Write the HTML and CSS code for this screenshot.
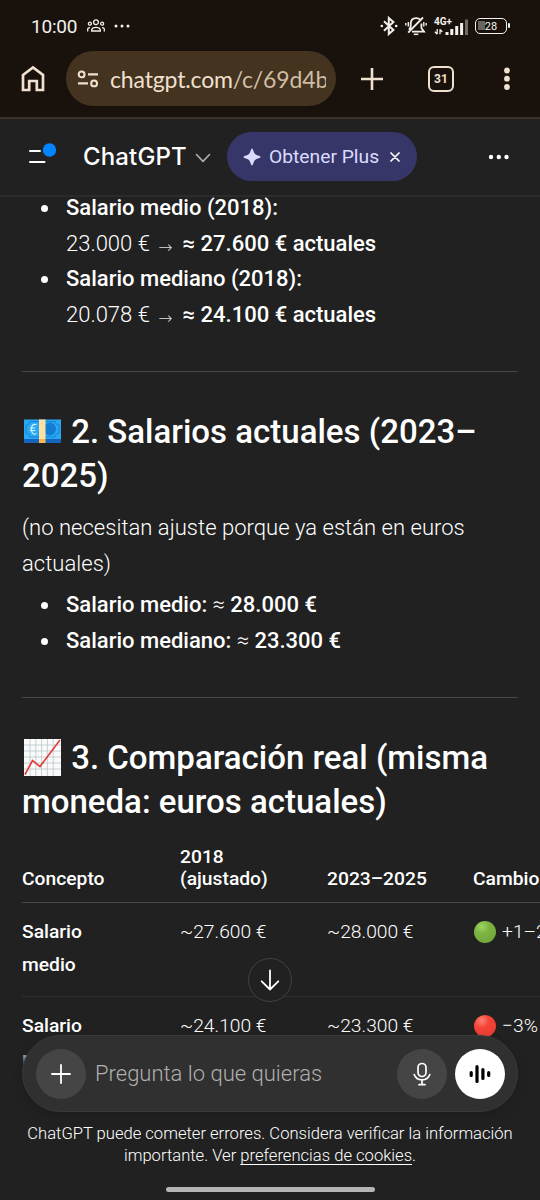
FILE: index.html
```html
<!DOCTYPE html>
<html lang="es">
<head>
<meta charset="utf-8">
<title>ChatGPT</title>
<link rel="stylesheet" href="styles.css">
</head>
<body>
<div class="phone">
  <div class="chrome">
    <div class="status">
      <span class="clock">10:00</span>
      <svg class="people" width="18" height="14" viewBox="0 0 18 14" fill="none" stroke="currentColor" stroke-width="1.3"><circle cx="9" cy="3.2" r="2.4"/><circle cx="2.9" cy="4.7" r="1.5"/><circle cx="15.1" cy="4.7" r="1.5"/><path d="M4.7 12v-1.4Q5.3 8.3 9 8.3t4.3 2.3V12ZM.7 12.5V10Q1 8.6 3 8.7M17.3 12.5V10Q17 8.6 15 8.7"/></svg>
      <svg class="dots" width="16" height="4" viewBox="0 0 16 4" fill="currentColor"><circle cx="2" cy="2" r="1.5"/><circle cx="8" cy="2" r="1.5"/><circle cx="14" cy="2" r="1.5"/></svg>
      <svg class="bt" width="18" height="20" viewBox="0 0 18 20" fill="none" stroke="currentColor" stroke-width="2"><path d="M4 5.2 13.4 14 8.8 18V2l4.6 4L4 14.8"/><circle cx="1.8" cy="10" r=".7" fill="currentColor" stroke-width="1.2"/><circle cx="16.2" cy="10" r=".7" fill="currentColor" stroke-width="1.2"/></svg>
      <svg class="bell" width="22" height="20" viewBox="0 0 22 20" fill="none" stroke="currentColor" stroke-width="1.8"><path d="M15.4 3.9Q13.9 2.1 11 2.1 6 2.1 5.7 7.6V11L4 13.8M7 15.6h12L16.4 12V7.6M3.2 16.6 18 1.5"/><path d="M8.8 18.3h4.5" stroke-width="1.5"/><path d="M3.3 6v4.5M18.8 6v4.5M.8 7.1v2.4M21.2 7.1v2.4" stroke-width="1.4"/></svg>
      <div class="network">
        <span class="net-label">4G+</span>
        <svg width="36" height="19" viewBox="0 0 36 19" fill="currentColor"><path d="M11.5 15h3v3h-3zM16.3 12h3v6h-3zM21.2 9h3v9h-3zM26.1 6h3v12h-3z"/><path opacity=".4" d="M31 2.5h3V18h-3z"/><path d="M3.2 12v5M.9 14.8l2.3 2.5M6 17.3v-5M6 12.5l2.3 2.5" fill="none" stroke="currentColor" stroke-width="1.3"/></svg>
      </div>
      <div class="battery"><span>28</span></div>
    </div>
    <div class="toolbar">
      <svg class="home" width="24" height="28" viewBox="0 0 24 28" fill="none" stroke="currentColor" stroke-width="2.7"><path d="M2 10 12 2.5l10 7.5V25h-6.2v-9H8.2v9H2Z"/></svg>
      <div class="url">
        <svg width="22" height="20" viewBox="0 0 22 20" fill="none" stroke="currentColor" stroke-width="2.1"><circle cx="4.6" cy="5.4" r="2.9"/><circle cx="17.1" cy="14.4" r="2.9"/><path d="M11 5.4h10M1 14.4h10"/></svg>
        <span class="address">chatgpt.com<span class="path">/c/69d4b7</span></span>
      </div>
      <svg class="plus" width="22" height="22" viewBox="0 0 22 22" stroke="currentColor" stroke-width="2.6"><path d="M11 0v22M0 11h22"/></svg>
      <div class="tabs">31</div>
      <svg class="kebab" width="8" height="24" viewBox="0 0 8 24" fill="currentColor"><circle cx="4" cy="3.5" r="2.9"/><circle cx="4" cy="11.7" r="2.9"/><circle cx="4" cy="20" r="2.9"/></svg>
    </div>
  </div>
  <header class="header">
    <svg class="menu" width="30" height="26" viewBox="0 0 30 26" fill="none" stroke="#fff" stroke-width="2" stroke-linecap="round"><path d="M2 11h10M2 22h14.5"/><circle cx="21.5" cy="10" r="6.7" fill="#0285ff" stroke="none"/></svg>
    <span class="brand">ChatGPT</span>
    <svg class="chevron" width="16" height="10" viewBox="0 0 16 10" fill="none" stroke="#afafaf" stroke-width="1.6" stroke-linecap="round" stroke-linejoin="round"><path d="M1.5 1.5 8 8.4l6.5-6.9"/></svg>
    <div class="upgrade">
      <svg width="18" height="18" viewBox="0 0 18 18" fill="currentColor"><path d="M9 .5Q9.7.5 10.2 2.2C11.2 5.7 12.3 6.8 15.8 7.8Q17.5 8.3 17.5 9T15.8 10.2C12.3 11.2 11.2 12.3 10.2 15.8Q9.7 17.5 9 17.5T7.8 15.8C6.8 12.3 5.7 11.2 2.2 10.2Q.5 9.7.5 9T2.2 7.8C5.7 6.8 6.8 5.7 7.8 2.2Q8.3.5 9 .5Z"/></svg>
      <span>Obtener Plus</span>
      <svg class="close" width="10" height="10" viewBox="0 0 10 10" stroke="#fff" stroke-width="1.7" stroke-linecap="round"><path d="m1 1 8 8M9 1 1 9"/></svg>
    </div>
    <svg class="more" width="22" height="6" viewBox="0 0 22 6" fill="#fff"><circle cx="3" cy="3" r="2.2"/><circle cx="10.8" cy="3" r="2.2"/><circle cx="18.5" cy="3" r="2.2"/></svg>
  </header>
  <main class="content">
    <ul class="list first">
      <li><b>Salario medio (2018):</b><br>23.000 € <span class="arrow">→</span> <b>≈ 27.600 € actuales</b></li>
      <li><b>Salario mediano (2018):</b><br>20.078 € <span class="arrow">→</span> <b>≈ 24.100 € actuales</b></li>
    </ul>
    <hr>
    <h2><svg class="emoji" width="38" height="38" viewBox="0 0 38 38"><path fill="#1565c0" d="M1 19h37v12H1z"/><path fill="#29a9f4" d="M1 7.500h37V27H1z"/><path d="M7 9.500h25q0 3 4 3.500v8q-4 .5-4 4H7q0-3.500-4-4v-8q4-.5 4-3.500Z" fill="none" stroke="#1477cf" stroke-width=".8"/><ellipse cx="27" cy="17" rx="6" ry="6.500" fill="#147cd3"/><path fill="#ffe0a0" d="M16 7.500h6.500V27H16z"/><path fill="#ffb74d" d="M16 27h6.500v4H16z"/><path d="M13.500 12.600q-5-1.500-5 4.600t5 4.600M6.800 16h5.500M6.800 18.500h5.500" fill="none" stroke="#d5f3ff" stroke-width="1.2"/></svg> 2. Salarios actuales (2023–<br>2025)</h2>
    <p>(no necesitan ajuste porque ya están en euros<br>actuales)</p>
    <ul class="list">
      <li><b>Salario medio:</b> ≈ <b>28.000 €</b></li>
      <li><b>Salario mediano:</b> ≈ <b>23.300 €</b></li>
    </ul>
    <hr>
    <h2><svg class="emoji" width="38" height="38" viewBox="0 0 38 38"><path fill="#fafafa" d="M1 1h37v37H1z"/><path d="M7 1v37M12.8 1v37M18.6 1v37M24.4 1v37M30.2 1v37M1 7h37M1 13h37M1 19h37M1 25h37M1 31h37" stroke="#b8c7cd" stroke-width=".8"/><path d="M2 36.500 9.500 22.500l7.500 6L37 2" fill="none" stroke="#e53935" stroke-width="1.6"/></svg> 3. Comparación real (misma<br>moneda: euros actuales)</h2>
    <div class="table">
      <div class="row head"><span>Concepto</span><span>2018<br>(ajustado)</span><span>2023–2025</span><span>Cambio</span></div>
      <div class="row"><b>Salario<br>medio</b><span>~27.600 €</span><span>~28.000 €</span><span class="change"><i class="ball green"></i>+1–2%</span></div>
      <div class="row"><b>Salario<br>mediano</b><span>~24.100 €</span><span>~23.300 €</span><span class="change"><i class="ball red"></i>−3%</span></div>
    </div>
  </main>
  <div class="scroll-down"><svg width="20" height="22" viewBox="0 0 20 22" fill="none" stroke="#fff" stroke-width="1.8" stroke-linecap="round" stroke-linejoin="round"><path d="M10 1.5v19M1.7 12.3l8.3 8.2 8.3-8.2"/></svg></div>
  <footer class="bottom">
    <div class="composer">
      <span class="round"><svg width="20" height="20" viewBox="0 0 20 20" stroke="#fff" stroke-width="1.8" stroke-linecap="round"><path d="M10 1v18M1 10h18"/></svg></span>
      <span class="placeholder">Pregunta lo que quieras</span>
      <span class="round"><svg width="18" height="24" viewBox="0 0 18 24" fill="none" stroke="#fff" stroke-width="1.7" stroke-linecap="round"><rect x="5" y="1.5" width="8" height="13" rx="4"/><path d="M1.2 12.5Q3 17.8 9 17.8t7.8-5.3M9 18v4.5M6 22.7h6"/></svg></span>
      <span class="round voice"><svg width="22" height="20" viewBox="0 0 22 20" stroke="#000" stroke-width="3.2" stroke-linecap="round"><path d="M2.2 8.500v3M8 2.500v15M13.9 5.500v9M19.700 8.500v3"/></svg></span>
    </div>
    <p class="notice">ChatGPT puede cometer errores. Considera verificar la información<br>importante. Ver <u>preferencias de cookies</u>.</p>
    <div class="gesture"></div>
  </footer>
</div>
</body>
</html>
```
FILE: styles.css
```css
* { box-sizing: border-box; }
body { margin: 0; background: #212121; color: #fff; font-family: Roboto, "Noto Sans", sans-serif; }
svg { display: block; flex: none; }
.phone { position: relative; width: 540px; height: 1200px; overflow: hidden; display: flex; flex-direction: column; background: #212121; }
.chrome { height: 119px; flex: none; background: #19120c; border-bottom: 2px solid #3a3225; color: #f0e0d0; }
.status { height: 52px; display: flex; align-items: center; padding: 0 31px; color: #f3f0ed; }
.clock { font-size: 19px; font-weight: 450; width: 56px; letter-spacing: -.2px; white-space: nowrap; }
.people { margin-right: 9px; }
.bt { margin-left: auto; margin-right: 7px; }
.bell { margin-right: 7px; }
.network { position: relative; width: 36px; height: 19px; margin-right: 5px; }
.net-label { position: absolute; left: 0; top: -1px; font-size: 10px; line-height: 11px; font-weight: 700; }
.battery { position: relative; width: 32px; height: 16px; border: 1.6px solid currentColor; border-radius: 5px; margin-right: 2px; background: linear-gradient(#69645f, #69645f) 2px 2px / 7px 9px no-repeat; display: flex; align-items: center; justify-content: center; font-size: 11px; }
.battery::after { content: ""; position: absolute; right: -4px; top: 4px; width: 2px; height: 5px; border-radius: 1px; background: currentColor; }
.toolbar { height: 53px; display: flex; align-items: center; padding-left: 21px; }
.home { margin-right: 21px; }
.url { width: 270px; height: 55px; border-radius: 28px; background: #43331f; display: flex; align-items: center; padding: 0 10px 0 11px; }
.address { margin-left: 11px; width: 216px; overflow: hidden; white-space: nowrap; font: 23px/32px Lato, Roboto, sans-serif; letter-spacing: -.15px; }
.path { color: #d0bda5; }
.plus { margin-left: 25px; }
.tabs { width: 26px; height: 26px; margin-left: 45px; border: 2.5px solid currentColor; border-radius: 6px; display: flex; align-items: center; justify-content: center; font-size: 12px; font-weight: 700; }
.kebab { margin-left: 49px; }
.header { height: 78px; flex: none; display: flex; align-items: center; border-bottom: 2px solid #2b2b2b; padding: 0 0 1px 28px; }
.menu { margin-top: -8px; }
.brand { margin-left: 25px; width: 105px; font: 500 24px/30px Inter, sans-serif; letter-spacing: .15px; }
.chevron { margin-left: 7px; margin-top: 3px; }
.upgrade { margin-left: 16px; width: 190px; height: 49px; border-radius: 25px; background: #373669; color: #dcdbff; display: flex; align-items: center; padding-left: 16px; font-size: 19.25px; }
.upgrade span { margin-left: 8px; width: 111px; white-space: nowrap; }
.close { margin-left: 10px; }
.more { margin-left: 71px; }
.content { flex: 1; overflow: hidden; padding: 0 22px; font-size: 22px; line-height: 35.5px; font-weight: 300; white-space: nowrap; }
b { font-weight: 500; }
.list { margin: 0; padding: 0; list-style: none; }
.list.first { margin-top: -7px; }
.list li { position: relative; padding-left: 44px; }
.list li::before { content: ""; position: absolute; left: 19px; top: 15px; width: 7px; height: 7px; border-radius: 50%; background: #fff; }
.arrow { display: inline-block; width: 22px; padding-left: 3px; font: 300 17px/20px "Noto Sans", "DejaVu Sans", sans-serif; vertical-align: -2px; color: #ddd; }
hr { margin: 39px 0 38px; border: 0; height: 1px; background: #474747; }
h2 { margin: 0 0 12px; font-size: 33px; line-height: 44px; font-weight: 500; }
.emoji { display: inline-block; width: 38px; height: 38px; margin: 0 2px 0 1px; vertical-align: -7px; }
p { margin: 0 0 6px; letter-spacing: .03px; }
.table { width: 620px; margin-top: 22px; font-size: 19.25px; line-height: 33px; }
.row { display: grid; grid-template-columns: 158px 147px 146px 1fr; padding: 12px 0 15px; border-bottom: 1px solid #303030; }
.head { padding: 0 0 12px; line-height: 22px; font-weight: 500; align-items: end; border-bottom: 1px solid #474747; }
.change { display: flex; height: 33px; align-items: center; }
.ball { width: 22px; height: 22px; margin: 0 6px 0 1px; border-radius: 50%; }
.green { background: radial-gradient(circle at 35% 25%, #9bd65c, #7cb342 35%, #6da335); }
.red { background: radial-gradient(circle at 35% 25%, #ff8175, #f44336 35%, #e53b31); }
.scroll-down { position: absolute; left: 248px; top: 958px; width: 44px; height: 44px; border: 1.5px solid #414141; border-radius: 50%; background: #212121; display: flex; align-items: center; justify-content: center; }
.bottom { position: absolute; left: 0; right: 0; bottom: 0; height: 165px; background: linear-gradient(transparent 10px, #212121 34px); display: flex; flex-direction: column; align-items: center; }
.composer { width: 496px; height: 77px; border-radius: 39px; background: #303030; border: 1px solid #3a3a3a; display: flex; align-items: center; padding: 0 12px 0 13px; box-shadow: 0 4px 12px #0002; flex: none; }
.round { width: 50px; height: 50px; border-radius: 50%; background: #454545; display: flex; align-items: center; justify-content: center; flex: none; }
.voice { background: #fff; margin-left: 8px; }
.placeholder { flex: 1; margin-left: 9px; color: #afafaf; font-size: 22px; font-weight: 300; }
.notice { margin: 11px 0 0; text-align: center; font-size: 16.6px; line-height: 22px; font-weight: 300; letter-spacing: 0; white-space: nowrap; }
.notice u { text-underline-offset: 3px; text-decoration-thickness: 1px; text-decoration-skip-ink: none; }
.gesture { width: 209px; height: 5px; border-radius: 3px; background: #b5b5b5; margin-top: 20px; }
```
